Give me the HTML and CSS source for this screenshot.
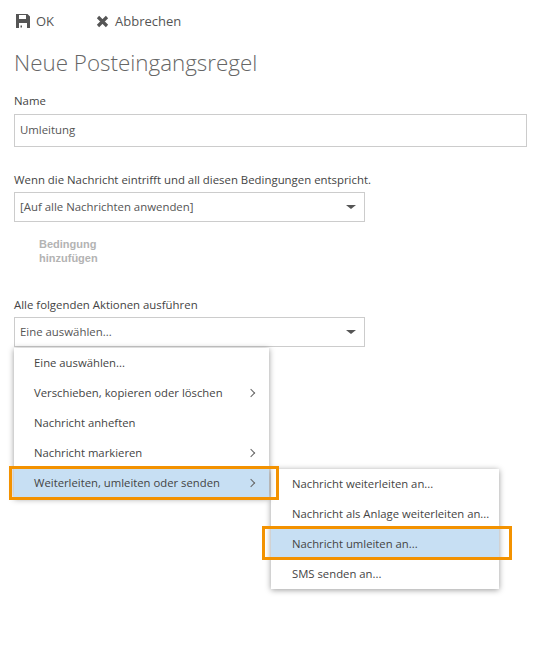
FILE: index.html
```html
<!DOCTYPE html>
<html>
<head>
<meta charset="utf-8">
<link rel="stylesheet" href="styles.css">
</head>

<body>
  <div class="toolbar">
    <div class="tool">
      <svg class="tool_icon" width="14" height="14" viewBox="0 0 14 14"><path d="M0 0H11.5L14 2.5V14H0ZM3 1V5H10V1ZM3 9V14H11V9ZM4.5 11.5H6V13.5H4.5Z" fill-rule="evenodd" fill="#555"/></svg>
      <span>OK</span>
    </div>
    <div class="tool">
      <svg class="tool_icon" width="13" height="13" viewBox="0 0 13 13"><path d="M2 2L11 11M11 2L2 11" stroke="#555" stroke-width="3.2" fill="none"/></svg>
      <span>Abbrechen</span>
    </div>
  </div>

  <h1 class="title">Neue Posteingangsregel</h1>

  <div class="field_label">Name</div>
  <div class="box name_box">Umleitung</div>

  <div class="field_label cond_label">Wenn die Nachricht eintrifft und all diesen Bedingungen entspricht.</div>
  <div class="box select_box">
    <span>[Auf alle Nachrichten anwenden]</span>
    <i class="arrow"></i>
  </div>
  <div class="add_cond">Bedingung<br>hinzufügen</div>

  <div class="field_label action_label">Alle folgenden Aktionen ausführen</div>
  <div class="box select_box">
    <span>Eine auswählen...</span>
    <i class="arrow"></i>
  </div>

  <div class="menu main_menu">
    <div class="item">Eine auswählen...</div>
    <div class="item">Verschieben, kopieren oder löschen<i class="chevron"></i></div>
    <div class="item">Nachricht anheften</div>
    <div class="item">Nachricht markieren<i class="chevron"></i></div>
    <div class="item active">Weiterleiten, umleiten oder senden<i class="chevron"></i><b class="mark mark_main"></b></div>
  </div>

  <div class="menu sub_menu">
    <div class="item">Nachricht weiterleiten an...</div>
    <div class="item">Nachricht als Anlage weiterleiten an...</div>
    <div class="item active">Nachricht umleiten an...<b class="mark mark_sub"></b></div>
    <div class="item">SMS senden an...</div>
  </div>
</body>
</html>
```

FILE: styles.css
```css
html, body {
  margin: 0;
  padding: 0;
  background-color: white;
  color: #444444;
  font-family: "Open Sans", "Noto Sans", sans-serif;
  font-size: 11.4px;
}

body {
  position: relative;
  height: 653px;
  padding: 0 14px;
  box-sizing: border-box;
  overflow: hidden;
}

.toolbar {
  display: flex;
  align-items: center;
  gap: 42px;
  height: 16px;
  padding: 13px 0 0 2px;
}

.tool {
  display: flex;
  align-items: center;
  gap: 6px;
  font-size: 13px;
  color: #555555;
}

.tool_icon {
  flex: none;
}

.title {
  margin: 10px 0 0;
  font-size: 22.4px;
  font-weight: 300;
  line-height: 48px;
  color: #666666;
}

.field_label {
  line-height: 16px;
  height: 16px;
  margin-top: 6px;
  color: #444444;
}

.cond_label {
  margin-top: 25px;
}

.action_label {
  margin-top: 32px;
}

.box {
  box-sizing: border-box;
  border: #cccccc 1px solid;
  padding: 0 6px 2px 5px;
  color: #555555;
  display: flex;
  align-items: center;
  justify-content: space-between;
  margin-top: 5px;
}

.name_box {
  height: 33px;
  width: 513px;
}

.select_box {
  height: 30px;
  width: 351px;
  margin-top: 4px;
  padding-right: 8px;
}

.arrow {
  width: 0;
  height: 0;
  margin-top: 2px;
  border-left: 5px solid transparent;
  border-right: 5px solid transparent;
  border-top: 4px solid #555555;
}

.add_cond {
  margin: 15px 0 0 25px;
  font-family: "Liberation Sans", sans-serif;
  font-size: 11px;
  font-weight: bold;
  line-height: 14px;
  color: #b3b3b3;
}

.menu {
  position: absolute;
  background-color: white;
  box-shadow: 0 1px 6px 0 rgba(0,0,0,0.4);
}

.main_menu {
  left: 14px;
  top: 348px;
  width: 255px;
  z-index: 2;
}

.sub_menu {
  left: 271px;
  top: 469px;
  width: 228px;
}

.item {
  position: relative;
  height: 30px;
  line-height: 30px;
  padding-left: 20px;
  font-size: 11.3px;
  color: #444444;
}

.sub_menu .item {
  padding-left: 21px;
}

.active {
  background-color: #c7dff3;
}

.chevron {
  position: absolute;
  right: 15px;
  top: 12px;
  width: 5px;
  height: 5px;
  border-top: #666666 1.3px solid;
  border-right: #666666 1.3px solid;
  transform: rotate(45deg);
}

.mark {
  position: absolute;
  box-sizing: border-box;
  border: #f39200 3px solid;
}

.mark_main {
  left: -5px;
  top: -2px;
  width: 270px;
  height: 34px;
}

.mark_sub {
  left: -9px;
  top: -3px;
  width: 250px;
  height: 34px;
}
```
